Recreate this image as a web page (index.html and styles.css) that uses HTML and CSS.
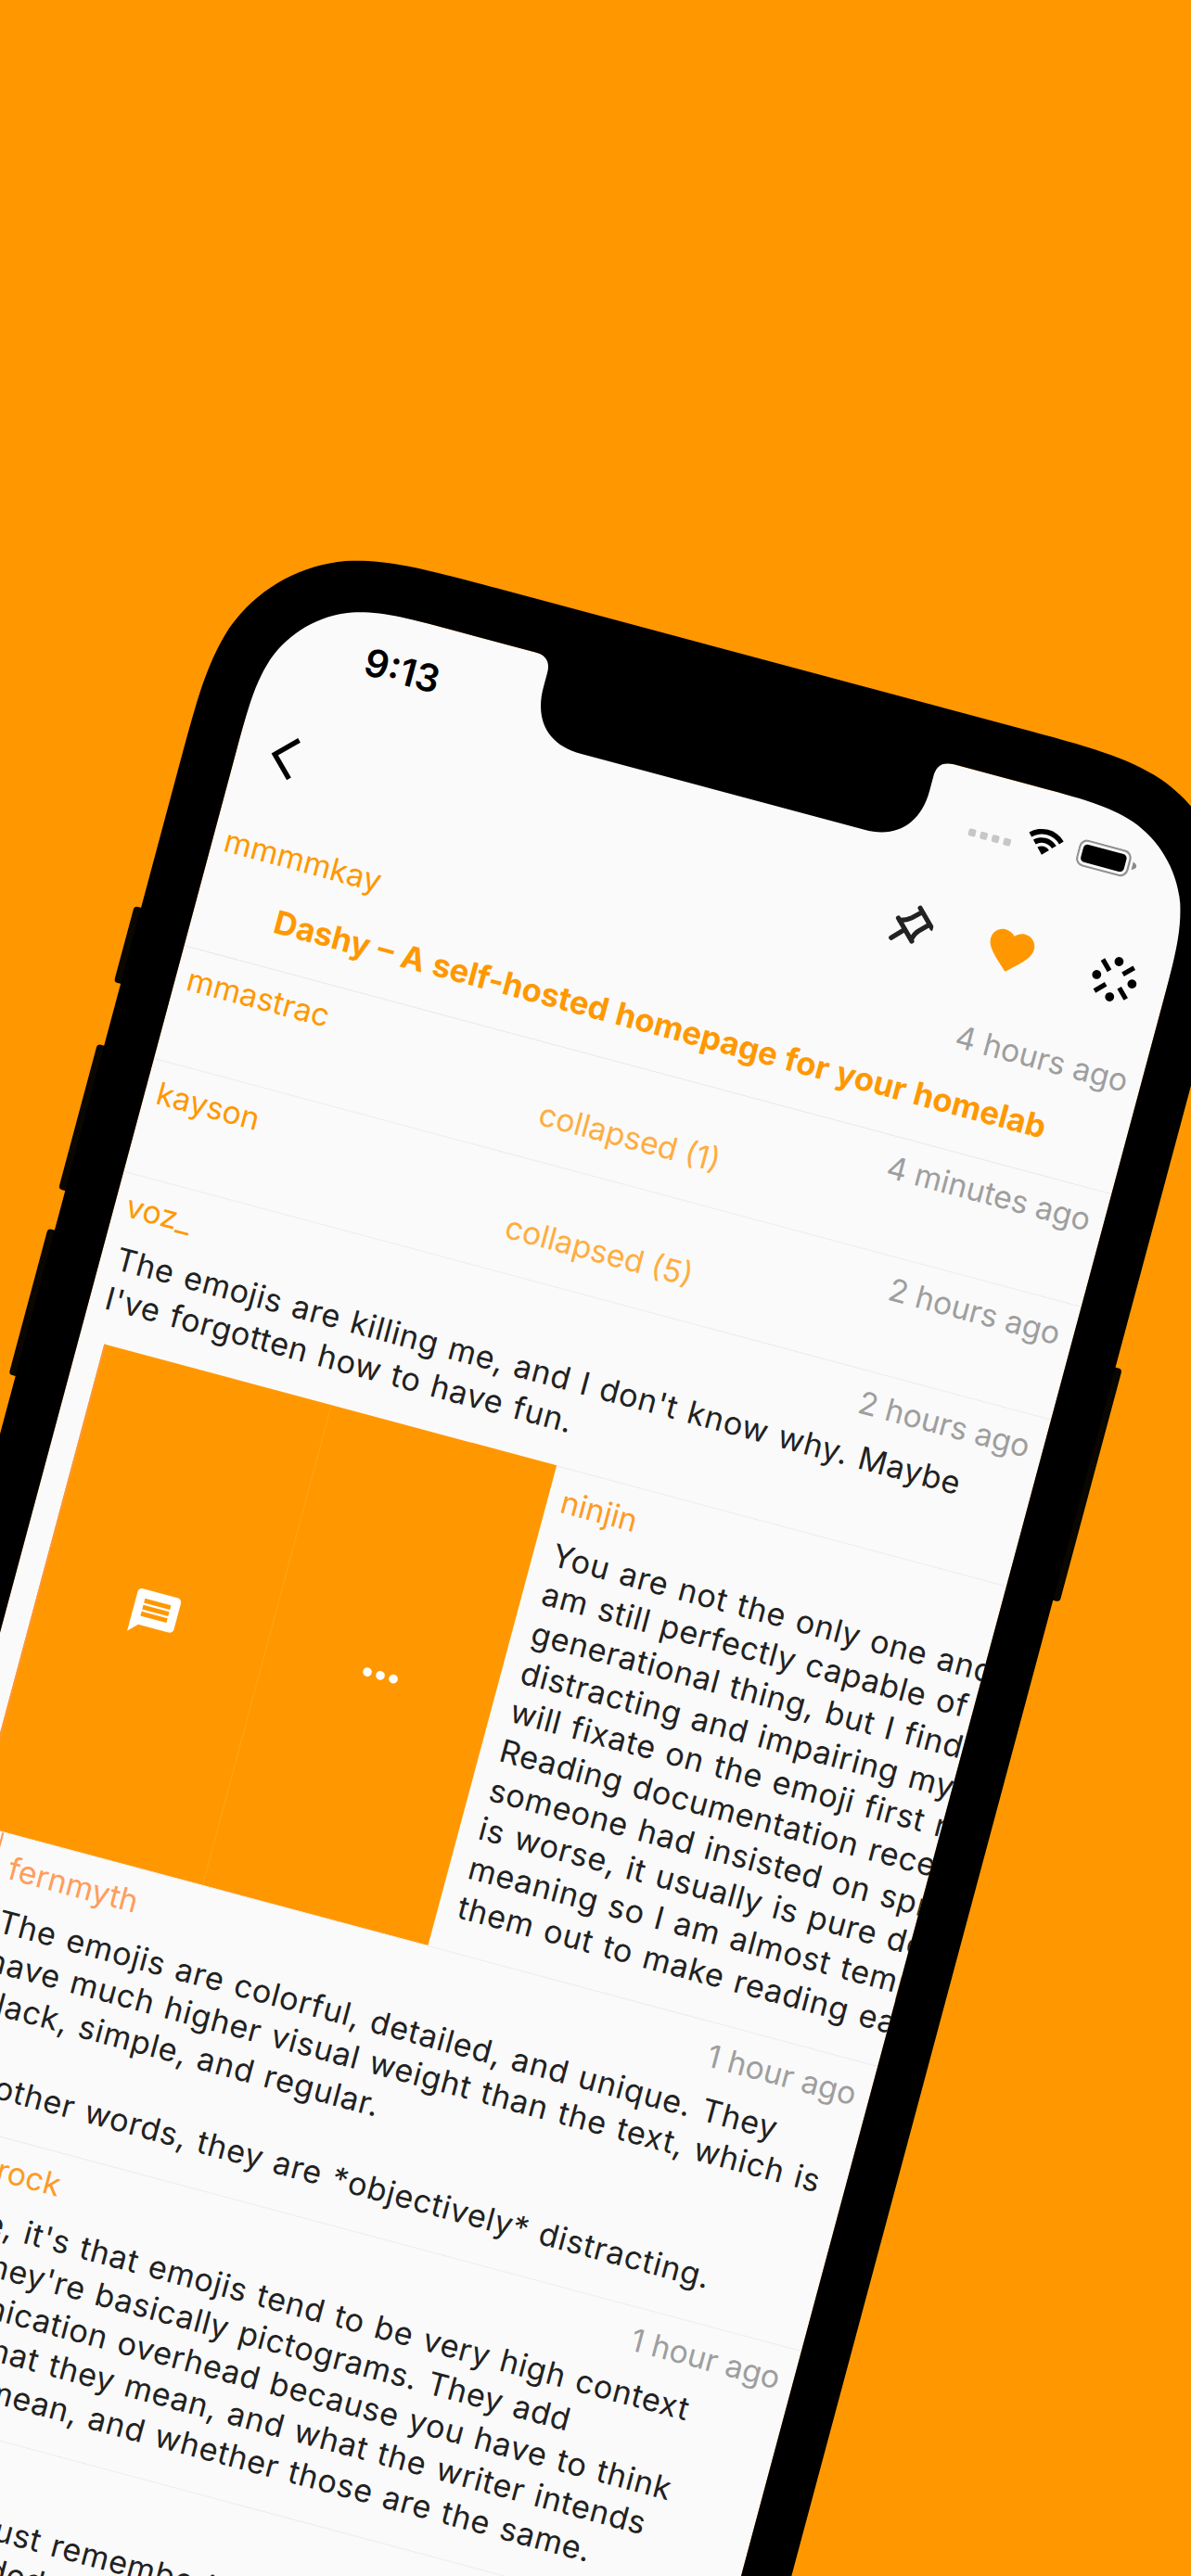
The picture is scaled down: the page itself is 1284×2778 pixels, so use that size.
FILE: index.html
```html
<!DOCTYPE html>
<html lang="en">
<head>
<meta charset="utf-8">
<title>Dashy – comments</title>
<link rel="stylesheet" href="styles.css">
</head>
<body>
<main class="stage">
  <div class="phone">
    <div class="screen">
      <div class="status">
        <span class="clock">9:13</span>
        <div class="indicators">
          <span class="signal"><i></i><i></i><i></i><i></i></span>
          <svg class="wifi" viewBox="0 0 41 29"><path d="M1.2 8.6A27.6 27.6 0 0 1 39.8 8.6L35.9 12.7A22 22 0 0 0 5.1 12.7ZM7.6 15.3A18.5 18.5 0 0 1 33.4 15.3L29.5 19.3A12.9 12.9 0 0 0 11.5 19.3ZM14 21.9A9.3 9.3 0 0 1 27 21.9L20.5 28.6Z"/></svg>
          <svg class="battery" viewBox="0 0 66 30"><rect x="1.1" y="1.1" width="56" height="27.4" rx="8" fill="none" stroke="#929292" stroke-width="2.2"/><rect x="5" y="5" width="48.2" height="19.6" rx="4.6"/><path d="M61 10.4c3 1 4.6 2.600 4.600 4.400s-1.600 3.400-4.600 4.400z" fill="#8a8a8a"/></svg>
        </div>
      </div>
      <nav class="toolbar">
        <svg class="back" viewBox="0 0 30 50"><path d="M27.500 3.500L6 25L27.500 46.500" fill="none" stroke="#000" stroke-width="5.400"/></svg>
        <div class="tools">
          <svg class="tool" viewBox="-6.500 0 58 58"><g fill="none" stroke="#222" stroke-width="5.200" stroke-linecap="round" stroke-linejoin="round"><path d="M32.500 9L50.500 27M12.500 25.500L33 46M22.500 35.500L10.500 48M36 12.500L26.500 21.500Q22 25.500 14.500 27.500M47 23.500L37.500 33Q33.500 37 32 44"/></g></svg>
          <svg class="tool" viewBox="0 0 24 24"><path fill="#ff9800" d="M12 21.350l-1.450-1.320C5.400 15.360 2 12.280 2 8.500 2 5.420 4.420 3 7.500 3c1.740 0 3.410.810 4.500 2.090C13.090 3.810 14.760 3 16.500 3 19.580 3 22 5.420 22 8.500c0 3.780-3.400 6.860-8.550 11.540L12 21.350z"/></svg>
          <svg class="tool" viewBox="-29 -29 58 58"><g stroke="#000" stroke-width="5.200"><path d="M-17.500-17.500L-7.500-7.500M17.500-17.500L7.500-7.500M-17.500 17.500L-7.500 7.500M17.500 17.500L7.500 7.500"/></g><circle cy="-19.700" r="4.900"/><circle cy="19.700" r="4.900"/><circle cx="-19.700" r="4.900"/><circle cx="19.700" r="4.900"/></svg>
        </div>
      </nav>
      <header class="story">
        <div class="meta"><span class="name">mmmmkay</span><time>4 hours ago</time></div>
        <h1>Dashy – A self-hosted homepage for your homelab</h1>
      </header>
      <article class="comment collapsed first">
        <div class="meta"><span class="name">mmastrac</span><time>4 minutes ago</time></div>
        <p class="count">collapsed (1)</p>
      </article>
      <article class="comment collapsed">
        <div class="meta"><span class="name">kayson</span><time>2 hours ago</time></div>
        <p class="count">collapsed (5)</p>
      </article>
      <article class="comment">
        <div class="meta"><span class="name">voz_</span><time>2 hours ago</time></div>
        <p class="text"><span>The emojis are killing me, and I don't know why. Maybe</span><span>I've forgotten how to have fun.</span></p>
      </article>
      <div class="swipe">
        <div class="actions">
          <div class="action"><svg viewBox="0 0 24 24"><path d="M20 2H4c-1.100 0-1.990.9-1.990 2L2 22l4-4h14c1.100 0 2-.9 2-2V4c0-1.100-.9-2-2-2zm-2 12H6v-2h12v2zm0-3H6V9h12v2zm0-3H6V6h12v2z"/></svg></div>
          <div class="action"><svg viewBox="0 0 24 24"><circle cx="6" cy="12" r="2"/><circle cx="12" cy="12" r="2"/><circle cx="18" cy="12" r="2"/></svg></div>
        </div>
        <article class="comment shifted level-1">
          <div class="meta"><span class="name">ninjin</span></div>
          <p class="text"><span>You are not the only one and</span><span>am still perfectly capable of</span><span>generational thing, but I find</span><span>distracting and impairing my</span><span>will fixate on the emoji first r</span><span>Reading documentation rece</span><span>someone had insisted on spr</span><span>is worse, it usually is pure de</span><span>meaning so I am almost temp</span><span>them out to make reading ea</span></p>
        </article>
      </div>
      <article class="comment level-2">
        <div class="meta"><span class="name">fernmyth</span><time>1 hour ago</time></div>
        <p class="text"><span>The emojis are colorful, detailed, and unique. They</span><span>have much higher visual weight than the text, which is</span><span>black, simple, and regular.</span><span>&nbsp;</span><span>In other words, they are *objectively* distracting.</span></p>
      </article>
      <article class="comment level-1">
        <div class="meta"><span class="name cut">rock</span><time>1 hour ago</time></div>
        <p class="text"><span class="cut-me">For me, it's that emojis tend to be very high context</span><span class="cut-they">they're basically pictograms. They add</span><span class="cut-comm">communication overhead because you have to think</span><span class="cut-what">about what they mean, and what the writer intends</span><span class="cut-mean">they mean, and whether those are the same.</span></p>
      </article>
      <article class="comment level-1">
        <div class="meta"></div>
        <p class="text"><span class="cut-just">just remembering</span><span class="cut-ded">ded</span></p>
      </article>
    </div>
    <svg class="frame" viewBox="-80 -80 1200 2700">
      <g class="buttons">
        <rect x="-63" y="376" width="14" height="85" rx="4"/>
        <rect x="-63" y="530" width="14" height="162" rx="4"/>
        <rect x="-63" y="736" width="14" height="163" rx="4"/>
        <rect x="1080" y="583" width="15" height="260" rx="4"/>
      </g>
      <path fill-rule="evenodd" d="M-55.500 2600V225.300C-55.500 144.300-55.500 103.800-41.700 60.200C-24.400 12.600 13.100-24.900 60.700-42.200C104.300-56 144.800-56 225.800-56H806.200C887.200-56 927.700-56 971.300-42.200C1018.900-24.900 1056.400 12.600 1073.700 60.200C1087.500 103.800 1087.500 144.300 1087.500 225.300V2600Z
      M0 2600H1035V197.200C1035 140.400 1035 112 1025.300 81.500C1013.200 48.100 986.900 21.800 953.500 9.700C923 0 894.600 0 837.800 0H751C739 0 733 6 733 18V34C733 72 711 93 676 93H359C324 93 302 72 302 34V18C302 6 296 0 284 0H197.200C140.400 0 112 0 81.500 9.700C48.100 21.800 21.800 48.100 9.700 81.500C0 112 0 140.400 0 197.200Z"/>
    </svg>
  </div>
</main>
</body>
</html>
```
FILE: styles.css
```css
* {
  box-sizing: border-box;
  margin: 0;
  padding: 0;
}

body {
  background: #ff9800;
  font-family: Inter, "Liberation Sans", sans-serif;
}

.stage {
  position: relative;
  width: 1284px;
  height: 2778px;
  overflow: hidden;
  background: #ff9800;
}

.phone {
  position: absolute;
  left: 302.5px;
  top: 629.5px;
  width: 1035px;
  height: 2600px;
  transform: rotate(15deg);
  transform-origin: 0 0;
}

.screen {
  width: 1035px;
  height: 2600px;
  border-radius: 100px 100px 0 0;
  overflow: hidden;
  background: #fafafa;
  font-size: 33.7px;
  line-height: 43.67px;
  color: #212121;
}

.frame {
  position: absolute;
  left: -80px;
  top: -80px;
  width: 1200px;
  height: 2700px;
}

.buttons {
  fill: #0a0600;
}

.status {
  display: flex;
  justify-content: space-between;
  height: 121px;
  padding: 0 65px 0 109px;
}

.clock {
  padding-top: 31px;
  font-size: 41px;
  line-height: 50px;
  font-weight: 600;
  color: #000;
}

.indicators {
  display: flex;
  padding-top: 41px;
}

.signal {
  display: flex;
  gap: 5px;
  padding-top: 21px;
}

.signal i {
  width: 8px;
  height: 8px;
  border-radius: 2px;
  background: #c7c7c7;
}

.wifi {
  width: 41px;
  height: 29px;
  margin: 0 16px 0 15px;
}

.battery {
  width: 66px;
  height: 30px;
}

.toolbar {
  display: flex;
  justify-content: space-between;
  align-items: center;
  height: 116px;
  padding: 0 28px 0 35px;
}

.back {
  width: 30px;
  height: 50px;
}

.tools {
  display: flex;
  gap: 58px;
}

.tool {
  width: 58px;
  height: 58px;
}

.story {
  height: 165.5px;
  padding-top: 22.5px;
}

.meta {
  display: flex;
  justify-content: space-between;
  height: 43.67px;
  padding: 0 15px 0 13px;
}

.name {
  color: #ff9800;
}

time {
  color: #9e9e9e;
  margin-left: auto;
}

h1 {
  margin-top: 28px;
  text-align: center;
  font-size: 34.6px;
  line-height: 43.67px;
  font-weight: 700;
  word-spacing: 1px;
  color: #ff9800;
}

.comment {
  padding: 12.5px 0 27.8px;
  border-top: 1px solid #ececec;
}

.first {
  border-top: 1.5px solid #e8e8e8;
  padding-top: 11.5px;
}

.collapsed {
  height: 126px;
}

.count {
  margin-top: -2px;
  text-align: center;
  color: #ffad40;
}

.text {
  margin-top: 14.3px;
  padding-left: 17px;
  font-size: 34.2px;
  letter-spacing: 0.64px;
  word-spacing: 1.5px;
}

.text span {
  display: block;
  white-space: pre;
}

.level-1 .name {
  color: #ff9a26;
}

.level-1 .meta,
.level-1 .text {
  margin-left: 31px;
}

.level-1 .text {
  letter-spacing: 0.72px;
}

.level-2 {
  position: relative;
}

.level-2::before {
  content: "";
  position: absolute;
  left: 58px;
  top: 0;
  bottom: 0;
  width: 2px;
  background: #ff9650;
}

.level-2 .name {
  color: #ff9d5c;
}

.level-2 .meta,
.level-2 .text {
  margin-left: 62px;
}

.level-2 .text {
  letter-spacing: 0.78px;
}

.meta .cut {
  margin-left: 103px;
}

.text .cut-me {
  padding-left: 5px;
}

.text .cut-they {
  padding-left: 107px;
}

.text .cut-comm {
  padding-left: 4px;
}

.text .cut-what {
  padding-left: 7px;
}

.text .cut-mean {
  padding-left: 64px;
}

.text .cut-just {
  padding-left: 188px;
}

.text .cut-ded {
  padding-left: 200px;
}

.swipe {
  display: flex;
  height: 536px;
}

.actions {
  flex: none;
  display: flex;
  width: 505px;
  margin-left: 28px;
  border-left: 2px solid #ff9633;
  background: #ff9800;
}

.action {
  flex: 1;
  display: flex;
  align-items: center;
  justify-content: center;
}

.action + .action {
  border-left: 1px solid #ffa31a;
}

.action svg {
  width: 58px;
  height: 58px;
  fill: #fff;
}

.shifted {
  flex: none;
  width: 1035px;
}

.shifted .meta,
.shifted .text {
  margin-left: 2px;
}

.shifted .text {
  padding-left: 19px;
}
```
